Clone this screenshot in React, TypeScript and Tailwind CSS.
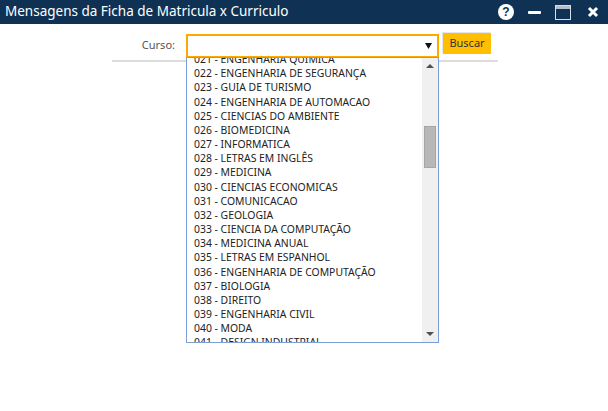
const cursos = [
  "021 - ENGENHARIA QUIMICA",
  "022 - ENGENHARIA DE SEGURANÇA",
  "023 - GUIA DE TURISMO",
  "024 - ENGENHARIA DE AUTOMACAO",
  "025 - CIENCIAS DO AMBIENTE",
  "026 - BIOMEDICINA",
  "027 - INFORMATICA",
  "028 - LETRAS EM INGLÊS",
  "029 - MEDICINA",
  "030 - CIENCIAS ECONOMICAS",
  "031 - COMUNICACAO",
  "032 - GEOLOGIA",
  "033 - CIENCIA DA COMPUTAÇÃO",
  "034 - MEDICINA ANUAL",
  "035 - LETRAS EM ESPANHOL",
  "036 - ENGENHARIA DE COMPUTAÇÃO",
  "037 - BIOLOGIA",
  "038 - DIREITO",
  "039 - ENGENHARIA CIVIL",
  "040 - MODA",
  "041 - DESIGN INDUSTRIAL",
];

function WindowIcons() {
  return (
    <div className="flex items-center">
      <div className="flex h-[16px] w-[16px] items-center justify-center rounded-full bg-white text-[12px] font-bold leading-none text-[#0f3254] font-['Liberation_Sans',sans-serif]">
        ?
      </div>
      <div className="ml-[14px] h-[3px] w-[13px] rounded-[1px] bg-white" />
      <div className="ml-[14px] flex h-[15px] w-[16px] flex-col border border-[#d5dde5]">
        <div className="h-[3px] bg-[#b4bfca]" />
      </div>
      <svg className="ml-[16px]" width="12" height="12" viewBox="0 0 12 12">
        <path d="M2 2l8 8M10 2l-8 8" stroke="#fff" strokeWidth="3" />
      </svg>
    </div>
  );
}

export default function App() {
  return (
    <div className="h-[411px] w-[608px] overflow-hidden bg-white font-['Noto_Sans',sans-serif]">
      <header className="flex h-[24px] items-center justify-between bg-[#0f3254] pl-[5px] pr-[9px]">
        <h1 className="text-[13.5px] leading-none text-white">Mensagens da Ficha de Matricula x Curriculo</h1>
        <WindowIcons />
      </header>

      <div className="ml-[112px] mt-[9px] w-[386px] border-b-2 border-[#dcdcdc] pb-[2px]">
        <div className="flex items-start">
          <label className="mt-[5px] w-[63px] text-right text-[11px] leading-[14px] text-[#555]">Curso:</label>
          <div className="relative ml-[11px] mt-[1px] w-[253px]">
            <div className="flex h-[24px] items-center justify-end border-2 border-[#ffa800] bg-white pr-[5px]">
              <svg width="7" height="6" viewBox="0 0 7 6">
                <path d="M0 0h7L3.5 6z" fill="#111" />
              </svg>
            </div>
            <div className="absolute left-0 top-[23px] flex h-[286px] w-[253px] border border-[#7c9fdc] bg-white">
              <ul className="flex-1 overflow-hidden pl-[7px] text-[10.4px] leading-[14.17px] text-[#222]">
                {cursos.map((c, i) => (
                  <li key={c} className={i === 0 ? "-mt-[6px] whitespace-nowrap" : "whitespace-nowrap"}>
                    {c}
                  </li>
                ))}
              </ul>
              <div className="flex w-[16px] flex-col items-center bg-[#f0f0f0]">
                <svg className="mt-[6px]" width="8" height="4" viewBox="0 0 8 4">
                  <path d="M0 4h8L4 0z" fill="#505050" />
                </svg>
                <div className="mt-[58px] h-[42px] w-[12px] border border-[#a6a6a6] bg-[#b8b8b8]" />
                <svg className="mt-auto mb-[6px]" width="8" height="4" viewBox="0 0 8 4">
                  <path d="M0 0h8L4 4z" fill="#505050" />
                </svg>
              </div>
            </div>
          </div>
          <button className="ml-[4px] h-[21px] w-[48px] bg-[#ffbf00] text-[11px] text-[#333] shadow-[-1px_-1px_0_#e6e6e6]">Buscar</button>
        </div>
      </div>
    </div>
  );
}
